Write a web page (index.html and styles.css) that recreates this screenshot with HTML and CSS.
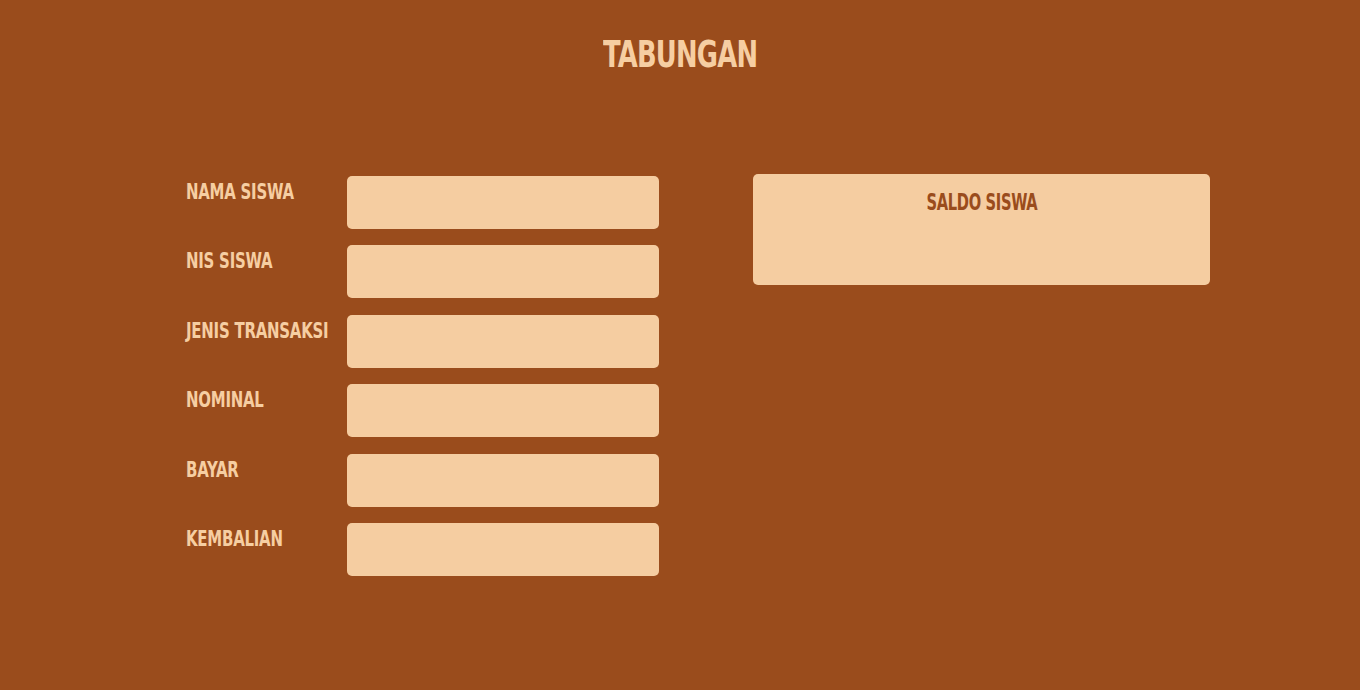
FILE: index.html
```html
<!DOCTYPE html>
<html lang="id">
<head>
<meta charset="utf-8">
<title>Tabungan</title>
<link rel="stylesheet" href="styles.css">
</head>
<body>
<h1 class="title"><span class="title-text">TABUNGAN</span></h1>
<main class="layout">
  <form class="form">
    <label class="label" for="nama"><span class="label-text">NAMA SISWA</span></label>
    <input class="field" id="nama" type="text">
    <label class="label" for="nis"><span class="label-text">NIS SISWA</span></label>
    <input class="field" id="nis" type="text">
    <label class="label" for="jenis"><span class="label-text">JENIS TRANSAKSI</span></label>
    <input class="field" id="jenis" type="text">
    <label class="label" for="nominal"><span class="label-text">NOMINAL</span></label>
    <input class="field" id="nominal" type="text">
    <label class="label" for="bayar"><span class="label-text">BAYAR</span></label>
    <input class="field" id="bayar" type="text">
    <label class="label" for="kembali"><span class="label-text">KEMBALIAN</span></label>
    <input class="field" id="kembali" type="text">
  </form>
  <section class="saldo">
    <h2 class="saldo-title"><span class="saldo-text">SALDO SISWA</span></h2>
  </section>
</main>
</body>
</html>
```
FILE: styles.css
```css
html, body {
  margin: 0;
  padding: 0;
}
body {
  background: #9a4c1c;
  color: #f6cea2;
  font-family: "DejaVu Sans Condensed", "DejaVu Sans", sans-serif;
  font-weight: 700;
  min-height: 690px;
}
.title {
  margin: 0;
  padding-top: 32px;
  text-align: center;
  font-size: 38px;
  line-height: 44px;
  letter-spacing: -1px;
  font-weight: 700;
  white-space: nowrap;
}
.title-text {
  display: inline-block;
  transform: scaleX(0.755);
  transform-origin: center;
}
.layout {
  display: flex;
  align-items: flex-start;
  padding: 100px 0 0 186px;
  gap: 94px;
}
.form {
  display: grid;
  grid-template-columns: 161px 312px;
  grid-auto-rows: 53px;
  row-gap: 16.4px;
  margin: 0;
}
.label {
  font-size: 22px;
  line-height: 26px;
  letter-spacing: -0.3px;
  padding-top: 3px;
  white-space: nowrap;
}
.label-text {
  display: inline-block;
  transform: scaleX(0.755);
  transform-origin: left center;
}
.field {
  box-sizing: border-box;
  width: 312px;
  height: 53px;
  border: none;
  border-radius: 5px;
  background: #f5cda1;
  margin: 0;
  padding: 0;
}
.saldo {
  box-sizing: border-box;
  width: 457px;
  height: 111px;
  margin-top: -2px;
  background: #f5cda1;
  border-radius: 5px;
  text-align: center;
  padding-top: 14px;
}
.saldo-title {
  margin: 0;
  color: #9a4c1c;
  font-size: 23px;
  line-height: 28px;
  letter-spacing: -0.5px;
  font-weight: 700;
  white-space: nowrap;
}
.saldo-text {
  display: inline-block;
  transform: scaleX(0.71);
  transform-origin: center;
}
```
